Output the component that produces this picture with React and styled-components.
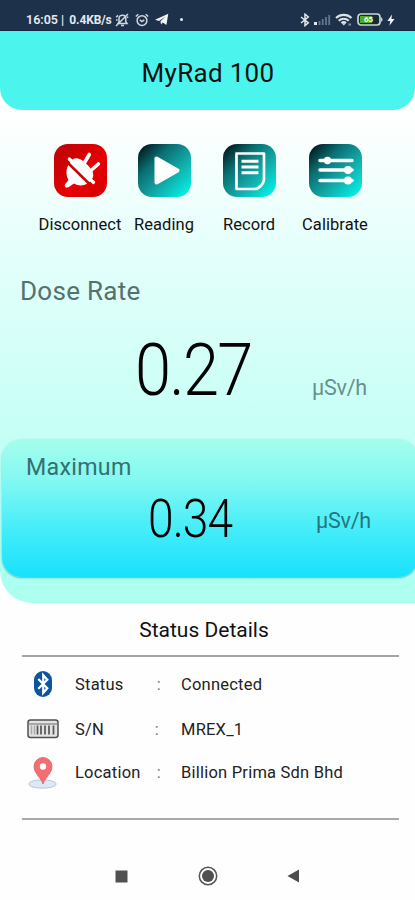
import React from 'react';
import styled, { createGlobalStyle } from 'styled-components';

const GlobalStyle = createGlobalStyle`
  * {
    box-sizing: border-box;
  }
  body {
    margin: 0;
    background: #fefefe;
    font-family: Roboto, "Liberation Sans", sans-serif;
    color: #111;
  }
  svg {
    display: block;
    flex-shrink: 0;
  }
`;

const Screen = styled.div`
  width: 415px;
  height: 900px;
  overflow: hidden;
  display: flex;
  flex-direction: column;
`;

const StatusBar = styled.div`
  height: 31px;
  flex-shrink: 0;
  padding: 8px 20px 0 26px;
  display: flex;
  justify-content: space-between;
  background: #1d314b;
  border-bottom: 1px solid #132842;
  color: #e4e9ef;
`;

const StatusGroup = styled.div`
  display: flex;
  align-items: center;
  height: 23px;
  gap: ${(props) => props.$gap}px;
`;

const Clock = styled.span`
  font-size: 12.5px;
  font-weight: 600;
  white-space: pre;
`;

const Speed = styled.span`
  font-size: 12px;
  font-weight: 700;
  letter-spacing: -0.1px;
  margin: 0 -3px 0 -1px;
`;

const Dot = styled.span`
  width: 3px;
  height: 3px;
  margin-left: 5px;
  border-radius: 50%;
  background: #e4e9ef;
`;

const Header = styled.header`
  height: 79px;
  flex-shrink: 0;
  display: flex;
  align-items: center;
  justify-content: center;
  padding: 4px 0 0 1px;
  background: #4bf5ee;
  border-radius: 0 0 22px 22px;
`;

const Title = styled.h1`
  margin: 0;
  font-size: 26px;
  font-weight: 400;
  letter-spacing: 0.3px;
`;

const Panel = styled.main`
  height: 493px;
  flex-shrink: 0;
  display: flex;
  flex-direction: column;
  background: linear-gradient(#ffffff 0%, #e4fffb 30%, #c5fff6 66%, #adfff0 92%);
  border-bottom-left-radius: 32px;
`;

const Tools = styled.nav`
  display: grid;
  grid-template-columns: 84px 84px 86px 86px;
  padding: 34px 0 0 38px;
`;

const Tool = styled.div`
  display: flex;
  flex-direction: column;
  align-items: center;
`;

const ToolIcon = styled.div`
  width: 53px;
  height: 53px;
  border-radius: 14px;
  background: ${(props) =>
    props.$danger
      ? 'linear-gradient(135deg, #b90508, #e60003 60%, #d40003)'
      : 'linear-gradient(135deg, #00080c 0%, #0a6f73 32%, #12a7a6 60%, #00fff0 100%)'};
`;

const ToolLabel = styled.span`
  margin-top: 18px;
  font-size: 16.5px;
  line-height: 20px;
  letter-spacing: 0.05px;
  white-space: nowrap;
`;

const DoseBlock = styled.section`
  height: 194px;
  flex-shrink: 0;
  margin-top: 10px;
  padding: 31px 48px 0 20px;
`;

const BlockName = styled.div`
  font-size: ${(props) => props.$size}px;
  line-height: 30px;
  letter-spacing: 0.3px;
  color: ${(props) => props.$color};
`;

const ReadRow = styled.div`
  display: flex;
  justify-content: space-between;
  align-items: flex-start;
`;

const Value = styled.span`
  font-weight: 300;
  transform-origin: left center;
  color: #000;
`;

const DoseValue = styled(Value)`
  margin: 28px 0 0 115px;
  font-size: 73px;
  line-height: 72px;
  letter-spacing: -2px;
  transform: scaleX(0.89);
`;

const MaxValue = styled(Value)`
  margin: 10px 0 0 122px;
  font-size: 53px;
  line-height: 54px;
  letter-spacing: -1px;
  transform: scaleX(0.87);
`;

const Unit = styled.span`
  margin-top: ${(props) => props.$top}px;
  font-size: 21.5px;
  line-height: 26px;
  letter-spacing: -0.2px;
  color: ${(props) => props.$color};
`;

const MaxCard = styled.section`
  height: 138px;
  flex-shrink: 0;
  margin: 0 -3px 0 2px;
  padding: 13px 47px 0 24px;
  border-radius: 20px;
  background: linear-gradient(#a5feec 0%, #83f8f2 30%, #45edf8 65%, #18e1fd 100%);
  box-shadow: 0 1px 2px rgba(0, 90, 100, 0.45);
`;

const Details = styled.section`
  margin: 0 16px 0 22px;
`;

const DetailsTitle = styled.h2`
  margin: 14px 0 12px;
  padding-right: 13px;
  text-align: center;
  font-size: 21px;
  line-height: 26px;
  font-weight: 400;
`;

const DetailList = styled.div`
  height: 165px;
  padding-top: 5px;
  border-top: 2px solid #a3a3a3;
  border-bottom: 2px solid #a9a9a9;
`;

const DetailRow = styled.div`
  display: grid;
  grid-template-columns: 42px 95px 22px 1fr;
  align-items: center;
  height: ${(props) => props.$height}px;
  font-size: 16.5px;
  letter-spacing: 0.22px;
  color: #222;
  white-space: nowrap;
`;

const DetailIcon = styled.div`
  display: flex;
  justify-content: center;
`;

const Label = styled.span`
  padding-left: 11px;
`;

const Colon = styled.span`
  justify-self: end;
  padding-right: ${(props) => props.$shift}px;
  color: #777;
`;

const NavBar = styled.footer`
  display: flex;
  align-items: center;
  justify-content: space-between;
  margin: 44px 115px 0;
  height: 24px;
`;

const BatteryBox = styled.div`
  position: relative;
  display: flex;
`;

const BatteryLevel = styled.span`
  position: absolute;
  left: 7px;
  top: 2px;
  font-size: 8px;
  line-height: 9px;
  font-weight: 700;
  color: #fff;
`;

const BellOff = () => (
  <svg width="14" height="14" viewBox="0 0 14 14" fill="none" stroke="#cfd7df" strokeWidth="1.5">
    <path d="M3 10.5h9L10.8 8.8V5.4C10.8 3.4 9.3 2.2 7.4 2.2S4 3.4 4 5.4v3.4zM6 12.4h3M1 13 13 1M1.2 4.2 3 2.4M1 7h1.6M12 4.5l1.3-.7" />
  </svg>
);

const Alarm = () => (
  <svg width="14" height="14" viewBox="0 0 14 14" fill="none" stroke="#cfd7df" strokeWidth="1.5">
    <circle cx="7" cy="7.6" r="4.9" />
    <path d="M.8 3.5 3.3 1.2M13.2 3.5 10.7 1.2M4.8 6.8 7 8.6l2.3-1.8" />
  </svg>
);

const Plane = () => (
  <svg width="14" height="13" viewBox="0 0 14 13" fill="#f1f4f6">
    <path d="M0 6.8 13.3.7 11.4 12 7.8 9.5 6 11.5 5.5 8.3 10.5 3.5 4 7.9z" />
  </svg>
);

const BluetoothSmall = () => (
  <svg width="10" height="14" viewBox="0 0 10 14" fill="none" stroke="#e3e8ed" strokeWidth="1.5">
    <path d="M1 4 8.3 9.8 5 12.6V1.2L8.3 4 1 10" />
  </svg>
);

const Signal = () => (
  <svg width="17" height="13" viewBox="0 0 17 13">
    <rect x="0" y="9" width="3" height="3" fill="#e3e8ed" />
    <path d="M5.5 12V8M8.7 12V6M12 12V4M15.2 12V2" stroke="#66778b" strokeWidth="1.8" />
  </svg>
);

const Wifi = () => (
  <svg width="18" height="14" viewBox="0 0 18 14" fill="none" stroke="#dbe3ea" strokeWidth="2.1">
    <path d="M1 5c4.3-4.2 11.2-4.2 15.5 0M3.7 7.7c2.9-2.7 7.2-2.7 10.1 0M6.4 10c1.5-1.2 3.2-1.2 4.7 0" />
    <path d="M6.8 10.3h4L8.8 12.6z" fill="#dbe3ea" stroke="none" />
    <path d="M13.5 11.5h2.5" stroke="#8091a0" />
  </svg>
);

const Battery = () => (
  <BatteryBox>
    <svg width="26" height="13" viewBox="0 0 26 13">
      <rect x="1" y="1" width="22" height="11" rx="3" fill="#172c30" stroke="#cad3da" strokeWidth="1.7" />
      <path d="M3 3h12v7H3z" fill="#4caf20" />
      <path d="M24 4.2c2 .8 2 3.8 0 4.6z" fill="#cad3da" />
    </svg>
    <BatteryLevel>65</BatteryLevel>
  </BatteryBox>
);

const Bolt = () => (
  <svg width="8" height="12" viewBox="0 0 8 12" fill="#f4f6f8">
    <path d="M5 .5.4 7H3.3L2.4 11.7 7.5 5H4.4z" />
  </svg>
);

const PlugIcon = () => (
  <svg width="53" height="53" viewBox="0 0 53 53">
    <path d="M18.5 15.5C23 12.5 28 15.5 32 19.5s8.5 8.5 7 13.5c-1 3-3 5-5.5 6.5-4.5 2.8-10 2.3-13.5 0L14 43.5 11 40.5l3.5-4.5c-3-5-2.5-12 .5-16z" fill="#fff" />
    <path d="M12.5 41.8 16 38M30 19.5 35.3 10.5M37 26.5 44.3 20" stroke="#fff" strokeWidth="3.6" strokeLinecap="round" />
    <path d="M13.5 18.5 37 41.5" stroke="#c90408" strokeWidth="2.5" />
    <path d="M15.3 15 39.5 38.5" stroke="#fff" strokeWidth="3.2" strokeLinecap="round" />
  </svg>
);

const PlayIcon = () => (
  <svg width="53" height="53" viewBox="0 0 53 53">
    <path d="M18.5 14.5v24L39.5 26.5z" fill="#fff" stroke="#fff" strokeWidth="4" strokeLinejoin="round" />
  </svg>
);

const RecordIcon = () => (
  <svg width="53" height="53" viewBox="0 0 53 53" fill="none" stroke="#fff">
    <path d="M13.5 9.5H41v26c0 4-5 9.5-9.5 9.5h-18z" strokeWidth="2.7" strokeLinejoin="round" />
    <path d="M18.5 17.2h17M18.5 23h17M18.5 28.8h17" strokeWidth="3" />
  </svg>
);

const SlidersIcon = () => (
  <svg width="53" height="53" viewBox="0 0 53 53" fill="#fff" stroke="#fff">
    <path d="M11 16.5h32M11 26h32M11 36.5h32" strokeWidth="3.6" strokeLinecap="round" />
    <circle cx="18.5" cy="16.5" r="3.7" stroke="none" />
    <circle cx="39" cy="26" r="4" stroke="none" />
    <circle cx="39" cy="36.5" r="4" stroke="none" />
  </svg>
);

const BluetoothIcon = () => (
  <svg width="20" height="28" viewBox="0 0 20 28">
    <rect x="1" y="1" width="18" height="26" rx="9" fill="#0d559d" />
    <path d="M5.3 9 14.3 18.2 10.2 22.8V5.2L14.3 9.7 5.3 18.7" fill="none" stroke="#fff" strokeWidth="2.2" />
  </svg>
);

const SerialIcon = () => (
  <svg width="32" height="20" viewBox="0 0 32 20">
    <rect x="1" y="1" width="30" height="17.5" rx="2.5" fill="#e3e3e3" stroke="#505050" strokeWidth="1.5" />
    <path d="M1.5 5h29" stroke="#858585" strokeWidth="1.3" />
    <path d="M4.5 6.5v9M7.5 6.5v9" stroke="#aaa" strokeWidth="1.5" />
    <path d="M10.5 6.5v9M14 6.5v9M18 6.5v9M22 6.5v9M26.5 6.5v9" stroke="#555" strokeWidth="1.7" />
  </svg>
);

const PinIcon = () => (
  <svg width="30" height="34" viewBox="0 0 30 34">
    <ellipse cx="14.5" cy="28" rx="13.7" ry="4.2" fill="#dce8f5" stroke="#b8c7db" />
    <path d="M15 28C12.5 21 6 17 6 10.5a9 9 0 0 1 18 0C24 17 17.5 21 15 28z" fill="#f46d70" stroke="#d56668" strokeWidth=".8" />
    <circle cx="15" cy="10.5" r="3.2" fill="#fff" />
  </svg>
);

const tools = [
  { name: 'Disconnect', icon: <PlugIcon />, danger: true },
  { name: 'Reading', icon: <PlayIcon /> },
  { name: 'Record', icon: <RecordIcon /> },
  { name: 'Calibrate', icon: <SlidersIcon /> },
];

const details = [
  { label: 'Status', value: 'Connected', icon: <BluetoothIcon />, height: 44, shift: 20 },
  { label: 'S/N', value: 'MREX_1', icon: <SerialIcon />, height: 46, shift: 22 },
  { label: 'Location', value: 'Billion Prima Sdn Bhd', icon: <PinIcon />, height: 41, shift: 20 },
];

const App = () => {
  return (
    <Screen>
      <GlobalStyle />
      <StatusBar>
        <StatusGroup $gap={6}>
          <Clock>16:05 |</Clock>
          <Speed>0.4KB/s</Speed>
          <BellOff />
          <Alarm />
          <Plane />
          <Dot />
        </StatusGroup>
        <StatusGroup $gap={4}>
          <BluetoothSmall />
          <Signal />
          <Wifi />
          <Battery />
          <Bolt />
        </StatusGroup>
      </StatusBar>
      <Header>
        <Title>MyRad 100</Title>
      </Header>
      <Panel>
        <Tools>
          {tools.map((tool) => (
            <Tool key={tool.name}>
              <ToolIcon $danger={tool.danger}>{tool.icon}</ToolIcon>
              <ToolLabel>{tool.name}</ToolLabel>
            </Tool>
          ))}
        </Tools>
        <DoseBlock>
          <BlockName $size={26} $color="#55716e">Dose Rate</BlockName>
          <ReadRow>
            <DoseValue>0.27</DoseValue>
            <Unit $top={69} $color="#67908c">µSv/h</Unit>
          </ReadRow>
        </DoseBlock>
        <MaxCard>
          <BlockName $size={23.2} $color="#32716f">Maximum</BlockName>
          <ReadRow>
            <MaxValue>0.34</MaxValue>
            <Unit $top={26} $color="#24757f">µSv/h</Unit>
          </ReadRow>
        </MaxCard>
      </Panel>
      <Details>
        <DetailsTitle>Status Details</DetailsTitle>
        <DetailList>
          {details.map((row) => (
            <DetailRow key={row.label} $height={row.height}>
              <DetailIcon>{row.icon}</DetailIcon>
              <Label>{row.label}</Label>
              <Colon $shift={row.shift}>:</Colon>
              <span>{row.value}</span>
            </DetailRow>
          ))}
        </DetailList>
      </Details>
      <NavBar>
        <svg width="13" height="13" viewBox="0 0 13 13">
          <rect x=".5" y=".5" width="12" height="12" fill="#505050" />
        </svg>
        <svg width="20" height="20" viewBox="0 0 20 20">
          <circle cx="10" cy="10" r="8.7" fill="none" stroke="#555" strokeWidth="1.5" />
          <circle cx="10" cy="10" r="6" fill="#505050" />
        </svg>
        <svg width="13" height="14" viewBox="0 0 13 14">
          <path d="M.5 7 12 .5v13z" fill="#4d4d4d" />
        </svg>
      </NavBar>
    </Screen>
  );
};

export default App;
